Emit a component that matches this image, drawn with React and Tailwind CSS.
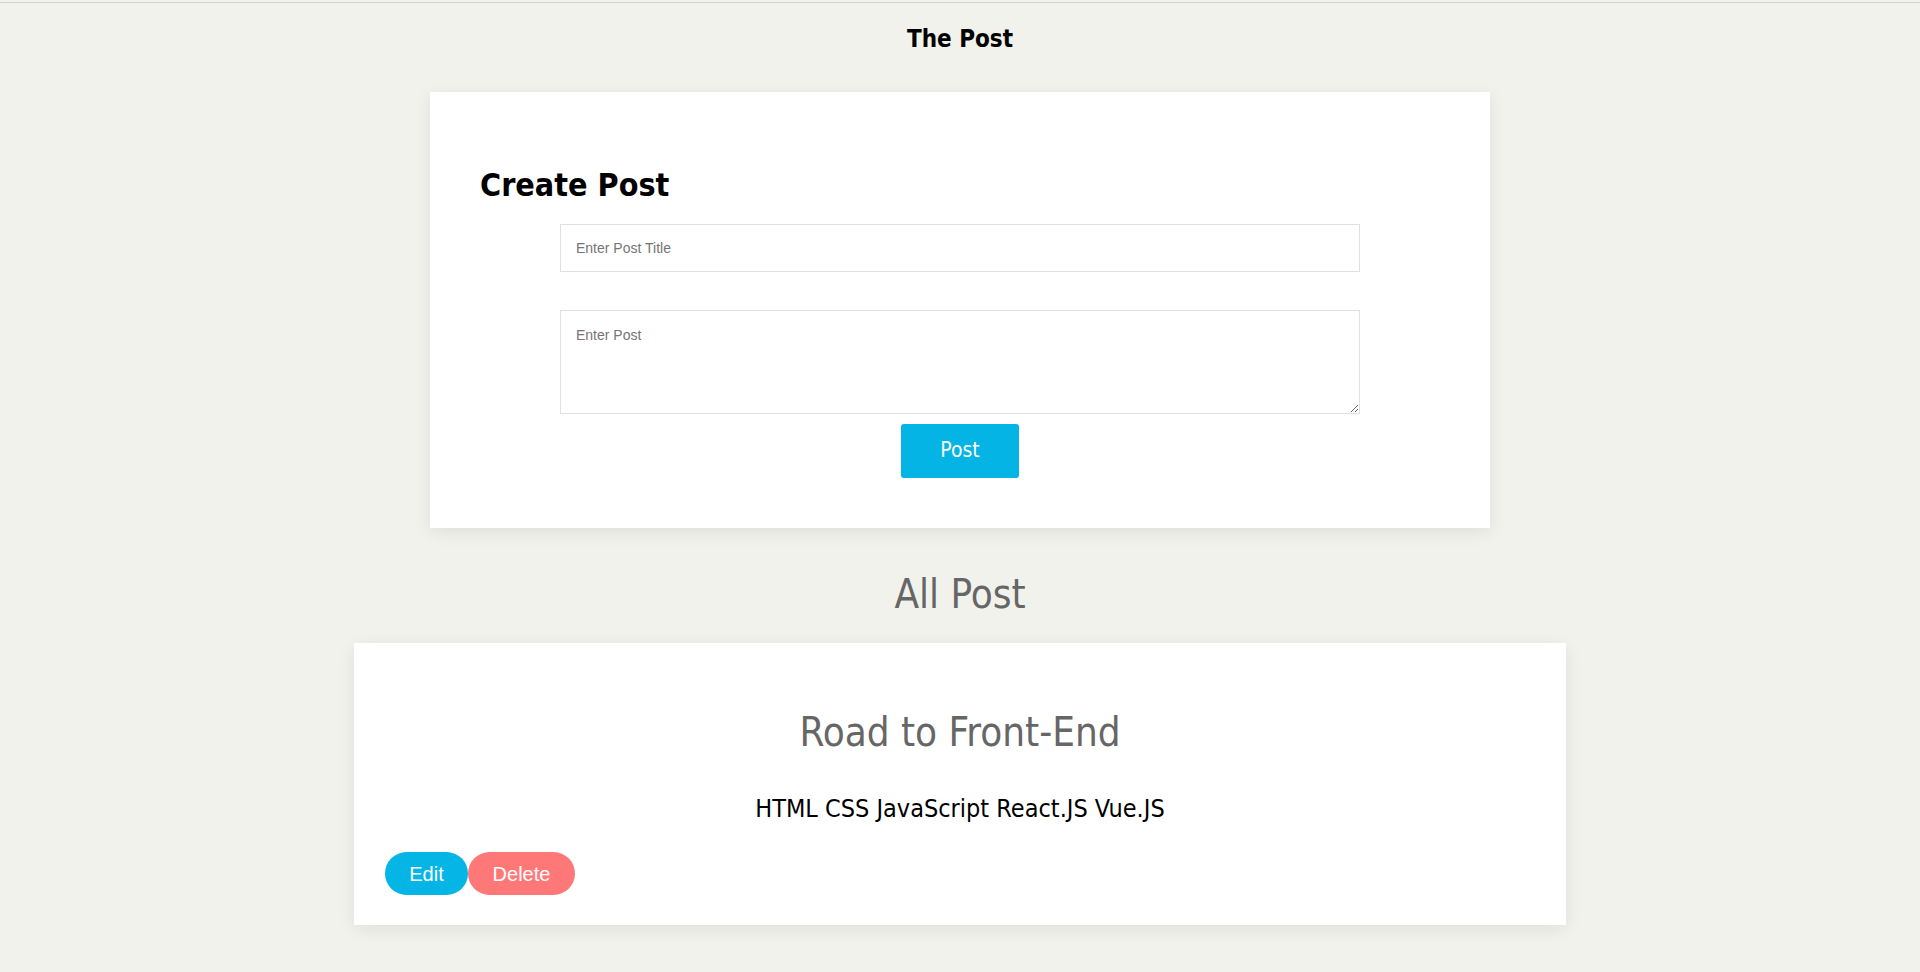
import React from 'react';

const heading = "font-['DejaVu_Sans_Condensed','DejaVu_Sans',sans-serif]";

const PostCard = ({ post }) => {
  return (
    <div className="w-[1212px] mx-auto bg-white shadow-[0_4px_16px_rgba(0,0,0,0.08)] pt-[69px] pb-[30px] pl-[31px]">
      <h3 className={`${heading} text-center text-[40px] leading-none text-[#666666] pr-[31px]`}>
        {post.title}
      </h3>
      <p className={`${heading} text-center text-[25px] leading-none text-black mt-[44px] pr-[31px]`}>
        {post.body}
      </p>
      <div className="flex mt-[31px]">
        <button className="h-[43px] w-[83px] rounded-full bg-[#05b5e5] text-white text-[20px] font-['Liberation_Sans',Arial,sans-serif]">
          Edit
        </button>
        <button className="h-[43px] w-[107px] rounded-full bg-[#ff7878] text-white text-[20px] font-['Liberation_Sans',Arial,sans-serif]">
          Delete
        </button>
      </div>
    </div>
  );
};

export default function App() {
  const posts = [
    { id: 1, title: 'Road to Front-End', body: 'HTML CSS JavaScript React.JS Vue.JS' },
  ];

  return (
    <div className="min-h-screen bg-[#f2f2ed] pt-[2px] pb-[40px]">
      {/* top rule */}
      <div className="h-px bg-[#d3d3d3]" />

      <h1 className={`${heading} text-center text-[24px] font-bold leading-none text-black mt-[24px]`}>
        The Post
      </h1>

      {/* Create post card */}
      <div className="w-[1060px] mx-auto mt-[41px] bg-white shadow-[0_4px_16px_rgba(0,0,0,0.08)] pt-[77px] pb-[50px] px-[50px]">
        <h2 className={`${heading} text-[32px] font-bold leading-none text-black`}>Create Post</h2>
        <div className="w-[800px] mx-auto mt-[23px] flex flex-col">
          <input
            type="text"
            placeholder="Enter Post Title"
            className="h-[48px] w-full border border-[#dde1e6] px-[15px] text-[14px] font-['Liberation_Sans',Arial,sans-serif] placeholder:text-[#757575] outline-none"
          />
          <textarea
            placeholder="Enter Post"
            className="h-[104px] w-full mt-[38px] border border-[#dde1e6] px-[15px] pt-[14px] text-[14px] font-['Liberation_Sans',Arial,sans-serif] placeholder:text-[#757575] outline-none block"
          />
          <button className={`${heading} self-center mt-[10px] w-[118px] h-[54px] rounded-[3px] bg-[#04b4e4] text-white text-[21px]`}>
            Post
          </button>
        </div>
      </div>

      <h2 className={`${heading} text-center text-[40px] leading-none text-[#666666] mt-[46px]`}>All Post</h2>

      <div className="mt-[29px]">
        {posts.map((post) => (
          <PostCard key={post.id} post={post} />
        ))}
      </div>
    </div>
  );
}
